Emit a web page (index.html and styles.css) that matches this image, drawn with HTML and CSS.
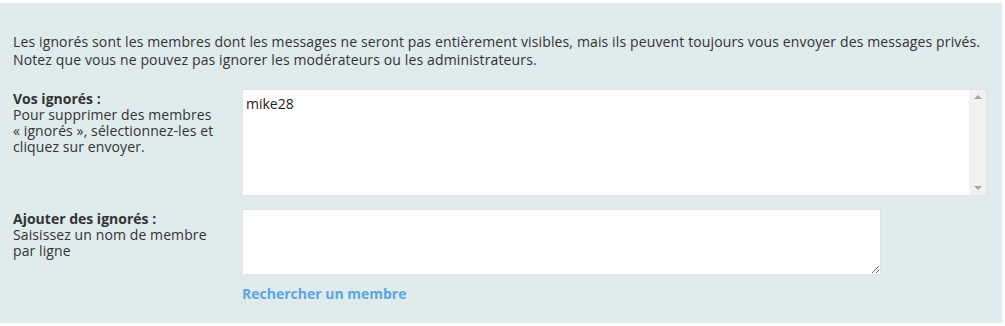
FILE: index.html
```html
<!DOCTYPE html>
<html lang="fr">
<head>
  <meta charset="UTF-8" />
  <title>Ignorés</title>
  <link rel="stylesheet" href="styles.css">
</head>
<body>

<div class="panel">
  <p class="intro">
    Les ignorés sont les membres dont les messages ne seront pas entièrement visibles, mais ils peuvent toujours vous envoyer des messages privés.<br>
    Notez que vous ne pouvez pas ignorer les modérateurs ou les administrateurs.
  </p>

  <div class="row">
    <div class="label">
      <strong>Vos ignorés :</strong>
      <span>Pour supprimer des membres «&nbsp;ignorés&nbsp;», sélectionnez-les et cliquez sur envoyer.</span>
    </div>
    <div class="field">
      <div class="listbox">
        <div class="options">
          <div class="option">mike28</div>
        </div>
        <div class="scrollbar">
          <span class="arrow up"></span>
          <span class="arrow down"></span>
        </div>
      </div>
    </div>
  </div>

  <div class="row row-add">
    <div class="label">
      <strong>Ajouter des ignorés :</strong>
      <span>Saisissez un nom de membre par ligne</span>
    </div>
    <div class="field">
      <textarea class="names"></textarea>
      <a class="search" href="#">Rechercher un membre</a>
    </div>
  </div>
</div>

</body>
</html>
```

FILE: styles.css
```css
body {
  margin: 0;
  background: #fff;
  font-family: 'Open Sans', sans-serif;
  font-size: 14px;
  color: #333;
}
.panel {
  margin: 3px 3px 0 0;
  height: 320px;
  box-sizing: border-box;
  background: #dfebec;
  border: 1px solid #e4e9ea;
  border-left: none;
  padding: 29px 14px 0 13px;
}
.intro {
  margin: 0 0 20px;
  line-height: 18px;
  letter-spacing: 0.13px;
}
.row {
  display: grid;
  grid-template-columns: 229px 1fr;
  line-height: 16px;
}
.label {
  padding-top: 1px;
}
.label strong {
  display: block;
  font-weight: 700;
  line-height: 17px;
}
.label span {
  display: block;
  width: 210px;
  letter-spacing: 0.1px;
}
.row-add {
  margin-top: 13px;
}
.listbox {
  display: flex;
  height: 107px;
  box-sizing: border-box;
  background: #fff;
  border: 1px solid #e3e3e3;
}
.options {
  flex: 1;
  padding: 5px 3px;
  color: #222;
}
.option {
  line-height: 17px;
}
.scrollbar {
  width: 17px;
  background: #f1f1f1;
  display: flex;
  flex-direction: column;
  justify-content: space-between;
  align-items: center;
  padding: 5px 0;
}
.arrow {
  width: 0;
  height: 0;
  border-left: 4px solid transparent;
  border-right: 4px solid transparent;
}
.arrow.up {
  border-bottom: 4px solid #a3a3a3;
}
.arrow.down {
  border-top: 4px solid #a3a3a3;
}
.names {
  display: block;
  width: 639px;
  height: 66px;
  box-sizing: border-box;
  margin: 0;
  border: 1px solid #e3e3e3;
  background: #fff;
  font-family: 'Open Sans', sans-serif;
  font-size: 14px;
  padding: 4px;
}
.search {
  display: inline-block;
  margin-top: 10px;
  color: #5ba6e0;
  font-weight: 700;
  text-decoration: none;
  line-height: 17px;
}
```
